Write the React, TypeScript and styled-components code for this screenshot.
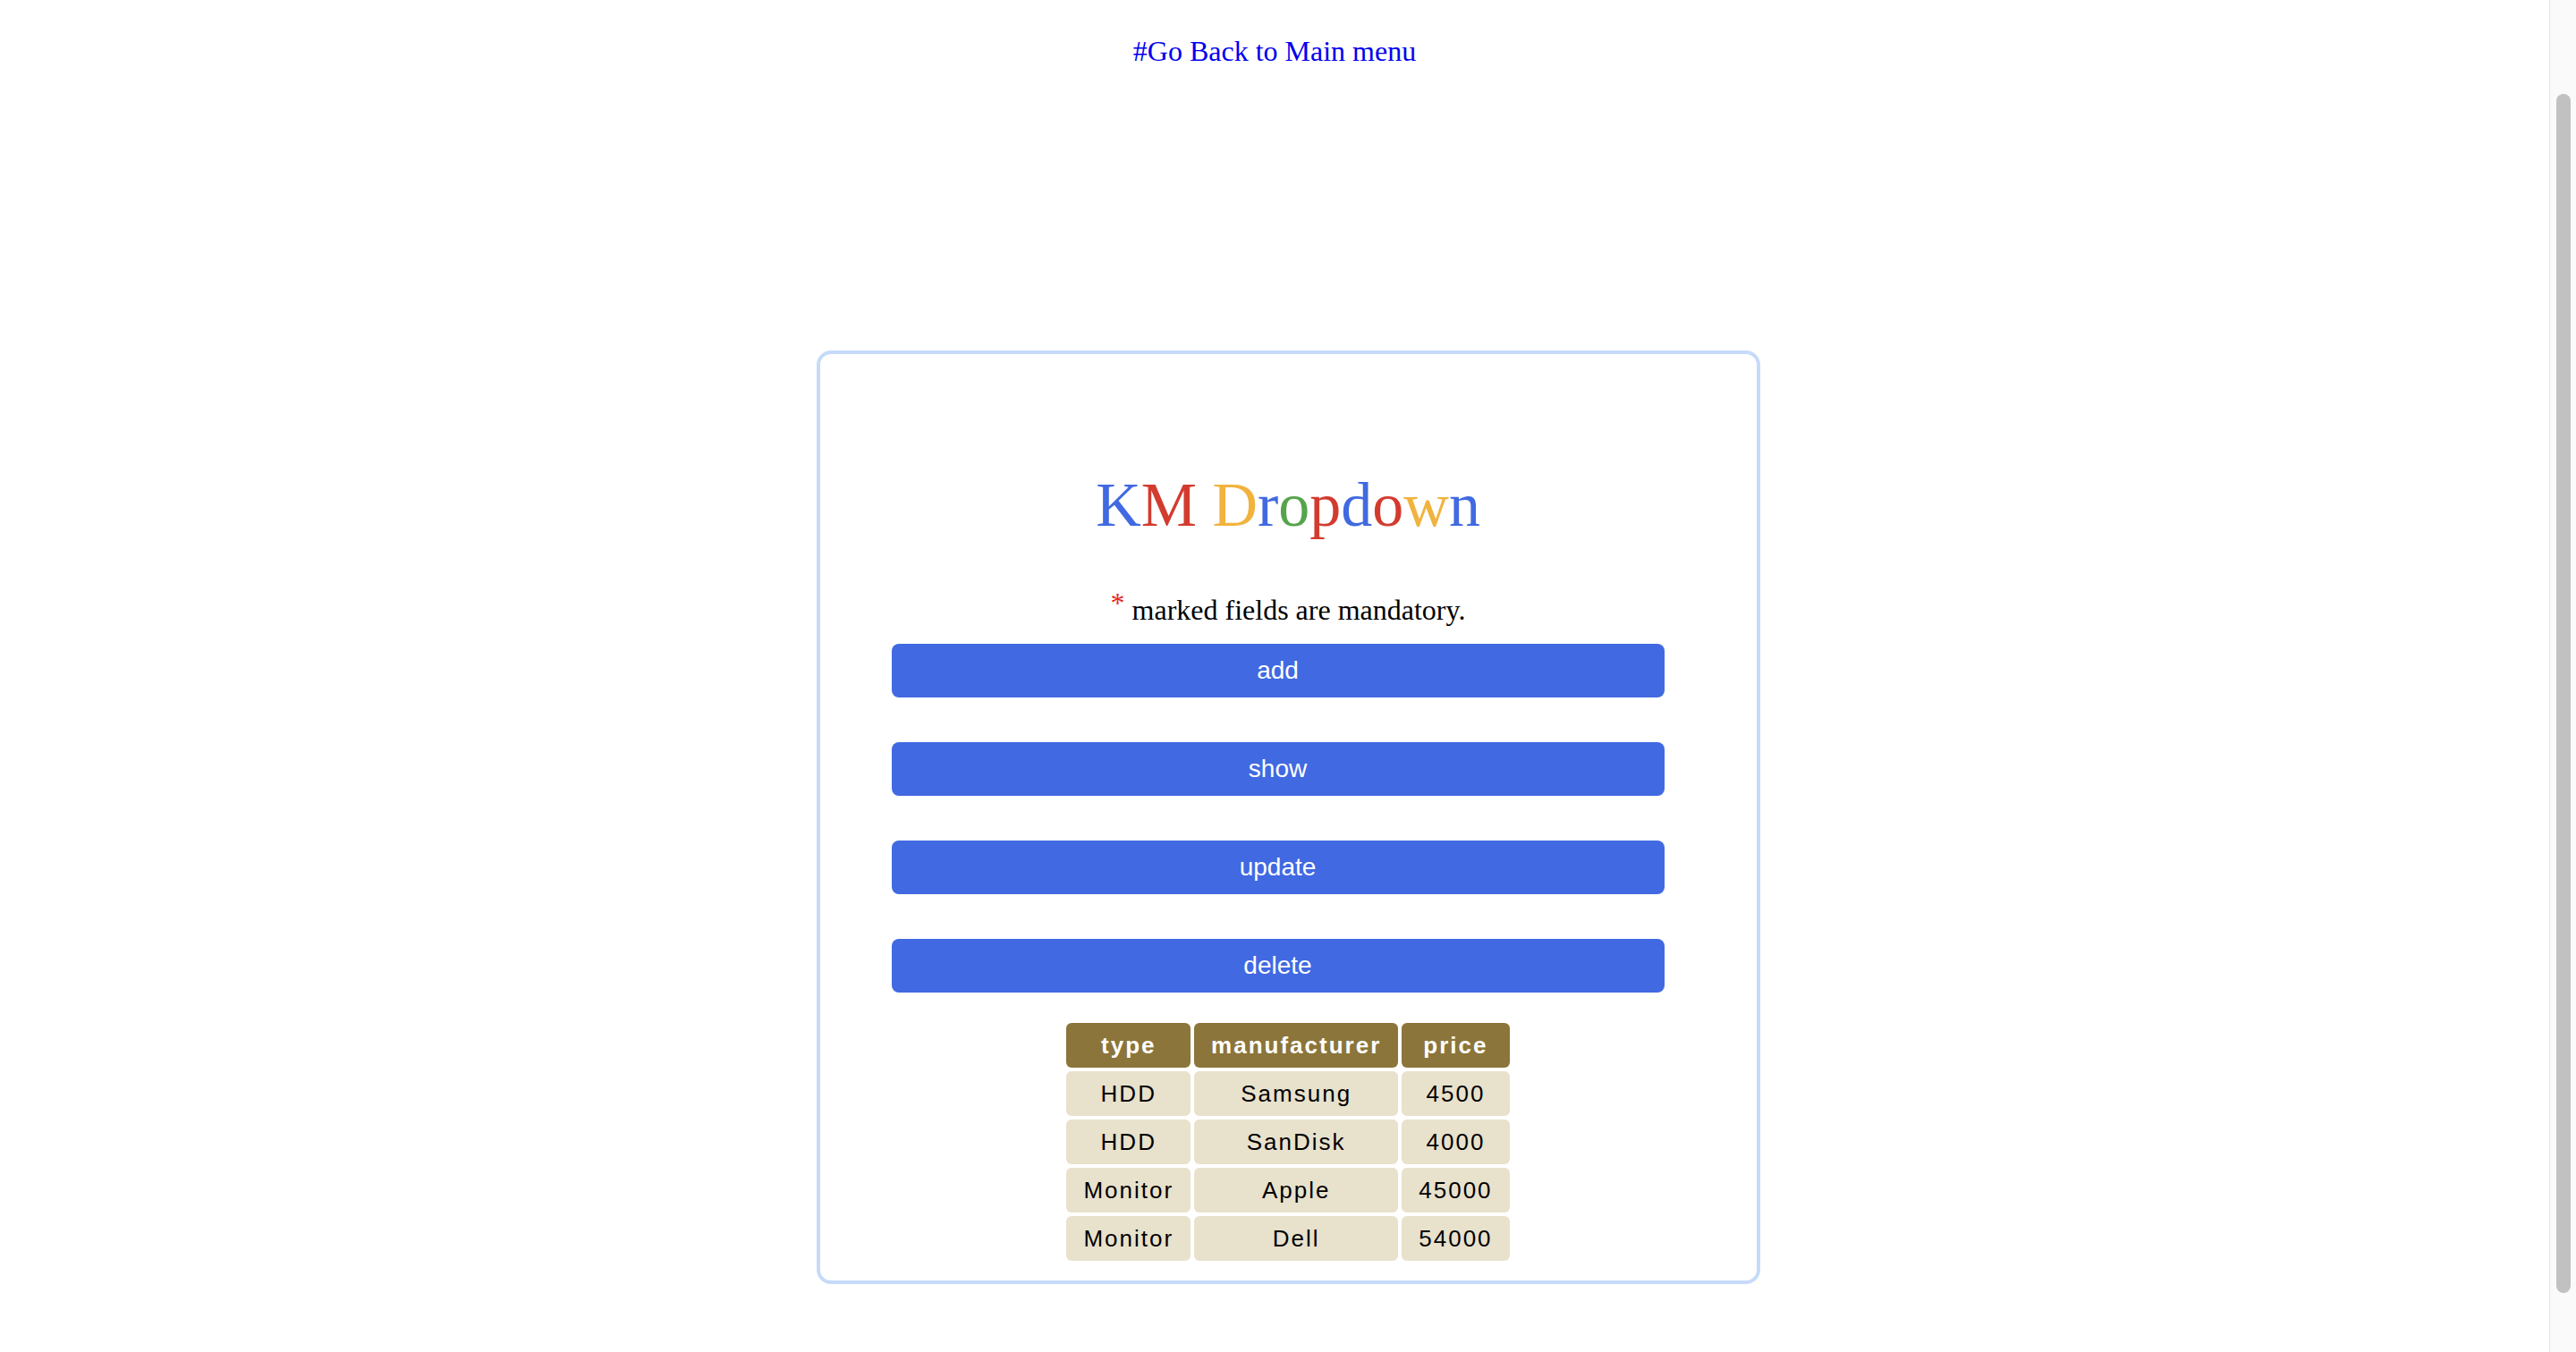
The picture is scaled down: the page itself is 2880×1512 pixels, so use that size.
import React from "react";
import styled, { createGlobalStyle } from "styled-components";

const GlobalStyle = createGlobalStyle`
  html, body {
    margin: 0;
    padding: 0;
    height: 100%;
    overflow: hidden;
    background: #ffffff;
  }
  #root {
    height: 100%;
  }
  *, *::before, *::after {
    box-sizing: border-box;
  }
`;

const Viewport = styled.div`
  display: flex;
  width: 100%;
  height: 100vh;
`;

const Page = styled.main`
  flex: 1;
  min-width: 0;
  display: flex;
  flex-direction: column;
  align-items: center;
  overflow: hidden;
  font-family: "Liberation Serif", "Times New Roman", serif;
  color: #000;
`;

const BackLink = styled.a`
  display: block;
  margin-top: 37px;
  font-size: 32px;
  line-height: 40px;
  color: #0000ee;
  text-decoration: none;
`;

const CardRow = styled.div`
  align-self: stretch;
  display: flex;
  justify-content: center;
  padding-left: 30px;
  margin-top: 315px;
`;

const Card = styled.section`
  width: 1055px;
  border: 4px solid #c6dafa;
  border-radius: 16px;
  padding: 129px 0 18px;
  display: flex;
  flex-direction: column;
  align-items: center;
`;

const Title = styled.h1`
  margin: 0;
  font-size: 70px;
  line-height: 80px;
  font-weight: 400;
  text-align: center;
`;

const Letter = styled.span<{ $c: string }>`
  color: ${(p) => p.$c};
`;

const Mandatory = styled.p`
  margin: 57px 0 0;
  font-size: 32px;
  line-height: 40px;
  text-align: center;
`;

const Star = styled.span`
  color: #e8261e;
  line-height: 0;
  vertical-align: 8px;
`;

const ButtonStack = styled.div`
  align-self: flex-start;
  margin: 18px 0 0 80px;
  display: flex;
  flex-direction: column;
  gap: 50px;
`;

const ActionButton = styled.button`
  width: 864px;
  height: 60px;
  border: none;
  border-radius: 8px;
  background: #4169e1;
  color: #ffffff;
  font-family: "Liberation Sans", Arial, sans-serif;
  font-size: 28px;
  padding: 0;
  cursor: pointer;
`;

const Table = styled.table`
  margin-top: 30px;
  border-collapse: separate;
  border-spacing: 4px;
  font-family: "Liberation Sans", Arial, sans-serif;
`;

const HeadCell = styled.th`
  background: #8b753a;
  color: #ffffff;
  font-weight: 700;
  font-size: 26px;
  line-height: 30px;
  letter-spacing: 2px;
  padding: 10px 19px;
  border-radius: 6px;
  text-align: center;
`;

const Cell = styled.td`
  background: #e8e1cc;
  color: #000000;
  font-size: 26px;
  line-height: 30px;
  letter-spacing: 2px;
  padding: 10px 19px;
  border-radius: 6px;
  text-align: center;
`;

const ScrollRail = styled.div`
  flex: none;
  width: 30px;
  background: #fafafa;
  border-left: 1px solid #e6e6e6;
  padding: 105px 6px 66px 7px;
  display: flex;
`;

const ScrollThumb = styled.div`
  flex: 1;
  background: #c1c1c1;
  border-radius: 8px;
`;

const BLUE = "#4169e1";
const RED = "#d33b2f";
const YELLOW = "#f1b33e";
const GREEN = "#55a44c";

const titleLetters: [string, string][] = [
  ["K", BLUE],
  ["M", RED],
  [" ", BLUE],
  ["D", YELLOW],
  ["r", BLUE],
  ["o", GREEN],
  ["p", RED],
  ["d", BLUE],
  ["o", RED],
  ["w", YELLOW],
  ["n", BLUE],
];

const rows = [
  { type: "HDD", manufacturer: "Samsung", price: "4500" },
  { type: "HDD", manufacturer: "SanDisk", price: "4000" },
  { type: "Monitor", manufacturer: "Apple", price: "45000" },
  { type: "Monitor", manufacturer: "Dell", price: "54000" },
];

export default function App() {
  return (
    <>
      <GlobalStyle />
      <Viewport>
        <Page>
          <BackLink href="#">#Go Back to Main menu</BackLink>
          <CardRow>
            <Card>
              <Title>
                {titleLetters.map(([ch, c], i) => (
                  <Letter key={i} $c={c}>
                    {ch}
                  </Letter>
                ))}
              </Title>
              <Mandatory>
                <Star>*</Star> marked fields are mandatory.
              </Mandatory>
              <ButtonStack>
                <ActionButton>add</ActionButton>
                <ActionButton>show</ActionButton>
                <ActionButton>update</ActionButton>
                <ActionButton>delete</ActionButton>
              </ButtonStack>
              <Table>
                <thead>
                  <tr>
                    <HeadCell>type</HeadCell>
                    <HeadCell>manufacturer</HeadCell>
                    <HeadCell>price</HeadCell>
                  </tr>
                </thead>
                <tbody>
                  {rows.map((r, i) => (
                    <tr key={i}>
                      <Cell>{r.type}</Cell>
                      <Cell>{r.manufacturer}</Cell>
                      <Cell>{r.price}</Cell>
                    </tr>
                  ))}
                </tbody>
              </Table>
            </Card>
          </CardRow>
        </Page>
        <ScrollRail>
          <ScrollThumb />
        </ScrollRail>
      </Viewport>
    </>
  );
}
